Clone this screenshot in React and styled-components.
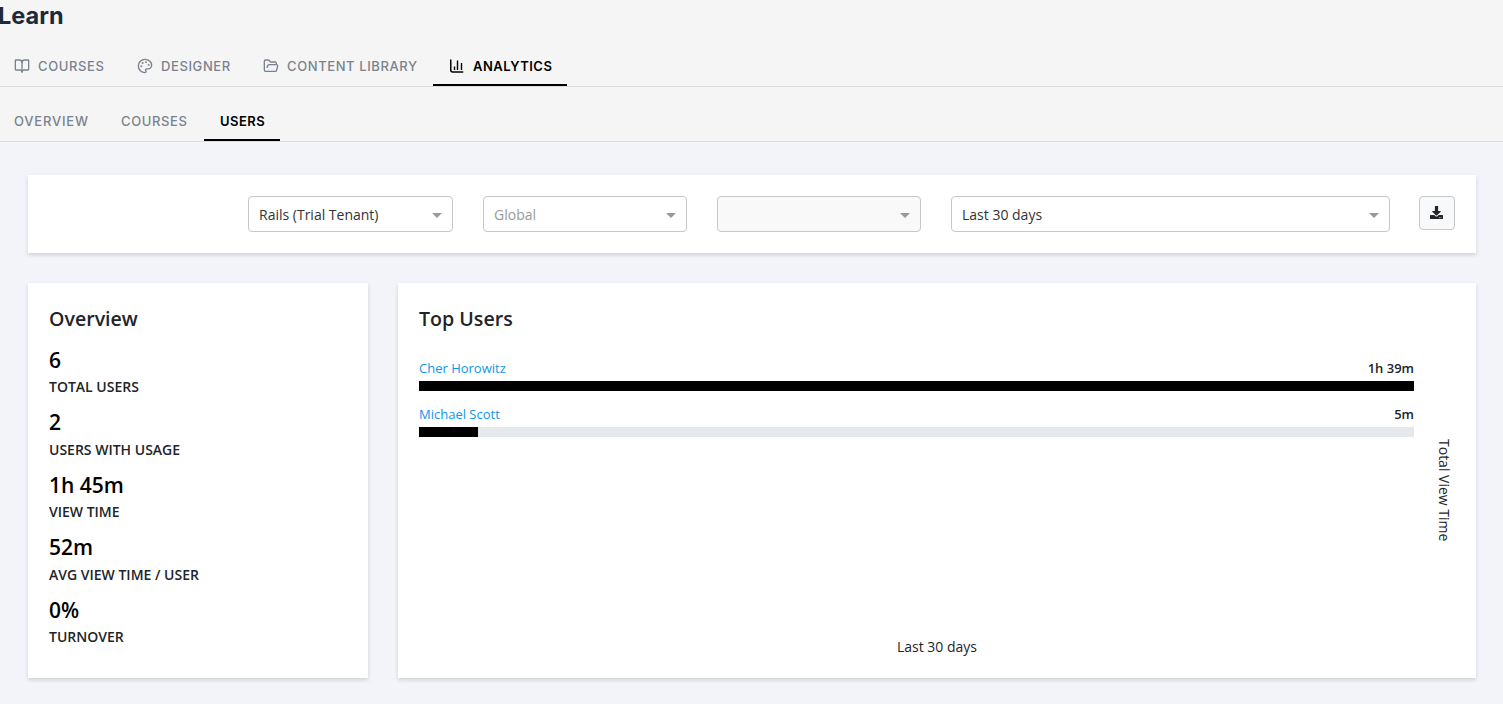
import React from "react";
import styled, { createGlobalStyle } from "styled-components";
import { FaDownload } from "react-icons/fa";
import { LuBookOpen, LuPalette, LuFolderOpen } from "react-icons/lu";

const tabs = [
  { label: "Courses", width: 123, icon: <LuBookOpen /> },
  { label: "Designer", width: 126, icon: <LuPalette /> },
  { label: "Content Library", width: 186, icon: <LuFolderOpen /> },
  { label: "Analytics", width: 134, spacing: 0.5, icon: <ChartIcon />, active: true },
];

const subTabs = [
  { label: "Overview", width: 107, spacing: 0.8 },
  { label: "Courses", width: 99 },
  { label: "Users", width: 76, spacing: 0.45, active: true },
];

const stats = [
  { value: "6", label: "Total Users" },
  { value: "2", label: "Users With Usage" },
  { value: "1h 45m", label: "View Time" },
  { value: "52m", label: "Avg View Time / User" },
  { value: "0%", label: "Turnover" },
];

const users = [
  { name: "Cher Horowitz", time: "1h 39m", percent: 100 },
  { name: "Michael Scott", time: "5m", percent: 5.95 },
];

function ChartIcon() {
  return (
    <svg viewBox="0 0 16 16" fill="none" stroke="currentColor">
      <path d="M1.75 1.5v10.5a2 2 0 0 0 2 2h10.5" strokeWidth="1.5" />
      <path d="M5.5 12V8.5M8.5 12V2.5M12.5 12V5" strokeWidth="1.4" />
    </svg>
  );
}

const Select = ({ value, width, muted, disabled }) => {
  return (
    <SelectBox $width={width} $muted={muted} $disabled={disabled}>
      <span>{value}</span>
      <Arrow />
    </SelectBox>
  );
};

const App = () => {
  return (
    <>
      <GlobalStyle />
      <Header>
        <Title>Learn</Title>
        <TabBar>
          {tabs.map((tab) => (
            <Tab
              key={tab.label}
              $width={tab.width}
              $spacing={tab.spacing}
              $active={tab.active}
            >
              {tab.icon}
              <span>{tab.label}</span>
            </Tab>
          ))}
        </TabBar>
        <SubTabBar>
          {subTabs.map((tab) => (
            <Tab
              key={tab.label}
              $width={tab.width}
              $spacing={tab.spacing}
              $active={tab.active}
            >
              <span>{tab.label}</span>
            </Tab>
          ))}
        </SubTabBar>
      </Header>
      <Content>
        <Filters>
          <Select value="Rails (Trial Tenant)" width={205} />
          <Select value="Global" width={204} muted />
          <Select value="" width={204} disabled />
          <Select value="Last 30 days" width={439} />
          <DownloadButton aria-label="Download">
            <FaDownload />
          </DownloadButton>
        </Filters>
        <Row>
          <Overview>
            <CardTitle>Overview</CardTitle>
            {stats.map((stat) => (
              <Stat key={stat.label}>
                <strong>{stat.value}</strong>
                <span>{stat.label}</span>
              </Stat>
            ))}
          </Overview>
          <TopUsers>
            <CardTitle>Top Users</CardTitle>
            <ChartArea>
              <Bars>
                {users.map((user) => (
                  <li key={user.name}>
                    <BarLabel>
                      <a href="#user">{user.name}</a>
                      <span>{user.time}</span>
                    </BarLabel>
                    <Track>
                      <Fill style={{ width: `${user.percent}%` }} />
                    </Track>
                  </li>
                ))}
              </Bars>
              <AxisLabel>Total View Time</AxisLabel>
            </ChartArea>
            <Period>Last 30 days</Period>
          </TopUsers>
        </Row>
      </Content>
    </>
  );
};

const GlobalStyle = createGlobalStyle`
  * {
    box-sizing: border-box;
  }
  body {
    margin: 0;
    background: #f3f4fa;
    color: #212529;
    font-family: "Open Sans", sans-serif;
    font-size: 14px;
  }
`;

const Header = styled.header`
  background: #f5f5f5;
  font-family: Inter, sans-serif;
`;

const Title = styled.h1`
  height: 46px;
  margin: 0 0 0 -2px;
  color: #1e293b;
  font-size: 23.5px;
  font-weight: 700;
  line-height: 32px;
`;

const TabBar = styled.nav`
  display: flex;
  height: 41px;
  margin-left: -2px;
  border-bottom: 1px solid #d9dde2;
  span {
    padding-top: 2px;
  }
`;

const SubTabBar = styled(TabBar)`
  height: 55px;
  padding-top: 15px;
  span {
    padding-top: 0;
  }
`;

const Tab = styled.div`
  display: flex;
  align-items: center;
  flex: 0 0 ${(props) => props.$width}px;
  gap: 8px;
  padding-left: 16px;
  border-bottom: 2px solid ${(props) => (props.$active ? "#000" : "transparent")};
  color: ${(props) => (props.$active ? "#000" : "#7a828d")};
  font-size: 13px;
  font-weight: ${(props) => (props.$active ? 600 : 500)};
  letter-spacing: ${(props) => props.$spacing || 0.6}px;
  text-transform: uppercase;
  white-space: nowrap;
  svg {
    width: 16px;
    height: 16px;
    margin-top: 1px;
  }
`;

const Content = styled.main`
  display: flex;
  flex-direction: column;
  gap: 30px;
  padding: 33px 27px 26px 28px;
`;

const Card = styled.section`
  background: #fff;
  box-shadow: 0 2px 4px rgba(0, 0, 0, 0.15);
`;

const Filters = styled(Card)`
  display: flex;
  align-items: flex-start;
  justify-content: flex-end;
  gap: 30px;
  height: 78px;
  padding: 21px 21px 0 0;
`;

const SelectBox = styled.div`
  display: flex;
  align-items: center;
  justify-content: space-between;
  width: ${(props) => props.$width}px;
  height: 36px;
  padding: 0 10px;
  border: 1px solid #c7c7c7;
  border-radius: 4px;
  background: ${(props) => (props.$disabled ? "#f9f9f9" : "#fff")};
  color: ${(props) => (props.$muted ? "#999" : "#333")};
`;

const Arrow = styled.i`
  margin-top: 2px;
  border: 5px solid transparent;
  border-top-color: #999;
  border-bottom: 0;
`;

const DownloadButton = styled.button`
  display: flex;
  align-items: center;
  justify-content: center;
  width: 36px;
  height: 34px;
  margin-left: -1px;
  padding: 0 1px 2px 0;
  border: 1px solid #c7c7c7;
  border-radius: 4px;
  background: #f8f9fb;
  color: #212529;
  font-size: 13px;
`;

const Row = styled.div`
  display: flex;
  gap: 30px;
`;

const Overview = styled(Card)`
  width: 340px;
  height: 395px;
  padding: 21px;
`;

const TopUsers = styled(Card)`
  display: flex;
  flex-direction: column;
  flex: 1;
  padding: 21px 21px 20px;
`;

const CardTitle = styled.h2`
  margin: 0 0 11px;
  font-size: 19.6px;
  font-weight: 600;
  line-height: 30px;
`;

const Stat = styled.div`
  height: 62.4px;
  strong {
    display: block;
    color: #000;
    font-size: 21px;
    font-weight: 600;
    line-height: 31.4px;
  }
  span {
    display: block;
    font-weight: 600;
    line-height: 22px;
    text-transform: uppercase;
  }
`;

const ChartArea = styled.div`
  display: flex;
  flex: 1;
`;

const Bars = styled.ul`
  flex: 0 0 995px;
  margin: 0;
  padding: 12px 0 0;
  list-style: none;
  li {
    height: 46px;
  }
`;

const BarLabel = styled.div`
  display: flex;
  justify-content: space-between;
  height: 24px;
  font-size: 13px;
  line-height: 22px;
  a {
    color: #1096ea;
    text-decoration: none;
  }
  span {
    font-weight: 600;
  }
`;

const Track = styled.div`
  height: 10px;
  background: #e5e9ec;
`;

const Fill = styled.div`
  height: 100%;
  background: #000;
`;

const AxisLabel = styled.div`
  align-self: center;
  margin-left: 21px;
  writing-mode: vertical-rl;
`;

const Period = styled.div`
  line-height: 22px;
  text-align: center;
`;

export default App;
